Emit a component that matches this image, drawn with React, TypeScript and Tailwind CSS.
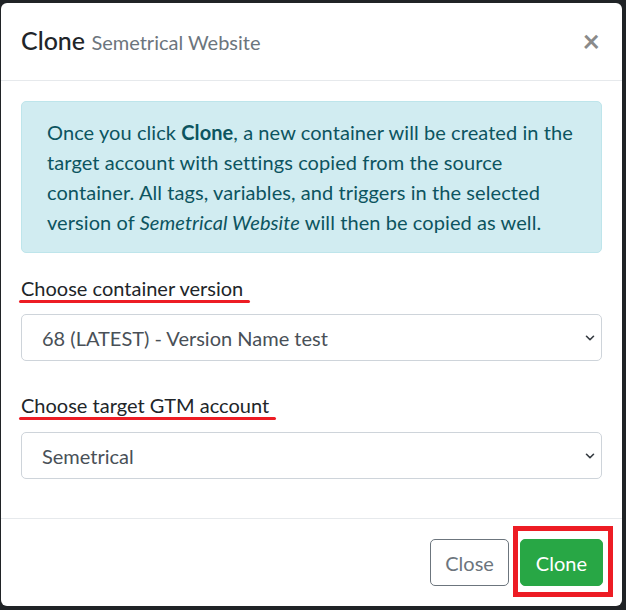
import { ChevronDown } from "lucide-react";

const font = "font-['Lato','Noto_Sans',sans-serif]";

const Annotated = ({ text, lineW }: { text: string; lineW: number }): JSX.Element => (
  <span className="relative inline-block">
    {text}
    <span
      className="absolute left-[-2px] bottom-[0px] h-[3px] rounded-full bg-[#ed1c24]"
      style={{ width: lineW }}
    />
  </span>
);

const FakeSelect = ({ value }: { value: string }): JSX.Element => (
  <div className="flex items-center justify-between h-[47px] border border-[#ced4da] rounded-[5px] pl-[20px] pr-[4px] text-[20px] text-[#495057]">
    <span>{value}</span>
    <ChevronDown size={14} strokeWidth={2.75} className="text-[#343a40]" />
  </div>
);

export default function App(): JSX.Element {
  return (
    <div className={`w-[626px] h-[610px] bg-[#202326] pt-[3px] pl-[1px] pr-[4px] pb-[4px] ${font}`}>
      <div className="h-full bg-white rounded-[6px] flex flex-col text-[#212529]">
        {/* header */}
        <div className="flex items-center justify-between h-[78px] px-[20px] border-b border-[#e6e9ec]">
          <h5 className="text-[25px] font-medium leading-[37px]">
            Clone <span className="text-[20px] font-normal text-[#6c757d]">Semetrical Website</span>
          </h5>
          <span className="text-[30px] font-bold leading-none text-[#8a8a8a] mr-[2px] mb-[4px]">×</span>
        </div>

        {/* body */}
        <div className="flex flex-col px-[20px] pt-[20px] text-[20px] leading-[30px]">
          <div className="border border-[#bee5eb] bg-[#d1ecf1] text-[#0c5460] rounded-[5px] px-[25px] py-[15px] whitespace-nowrap tracking-[0.08px]">
            Once you click <b>Clone</b>, a new container will be created in the
            <br />
            target account with settings copied from the source
            <br />
            container. All tags, variables, and triggers in the selected
            <br />
            version of <i>Semetrical Website</i> will then be copied as well.
          </div>

          <label className="mt-[20px] mb-[11px]">
            <Annotated text="Choose container version" lineW={231} />
          </label>
          <FakeSelect value="68 (LATEST) - Version Name test" />

          <label className="mt-[29px] mb-[12px]">
            <Annotated text="Choose target GTM account" lineW={257} />
          </label>
          <FakeSelect value="Semetrical" />
        </div>

        {/* footer */}
        <div className="mt-auto flex items-center justify-end gap-[11px] h-[88px] pr-[19px] border-t border-[#e6e9ec]">
          <button className="h-[47px] px-[14px] border border-[#6c757d] rounded-[5px] text-[20px] text-[#6c757d]">
            Close
          </button>
          <div className="relative">
            <button className="h-[47px] px-[15px] bg-[#28a745] border border-[#28a745] rounded-[5px] text-[20px] text-white">
              Clone
            </button>
            <span className="absolute left-[-7px] right-[-10px] top-[-13px] bottom-[-11px] border-[5px] border-[#ed1c24]" />
          </div>
        </div>
      </div>
    </div>
  );
}
